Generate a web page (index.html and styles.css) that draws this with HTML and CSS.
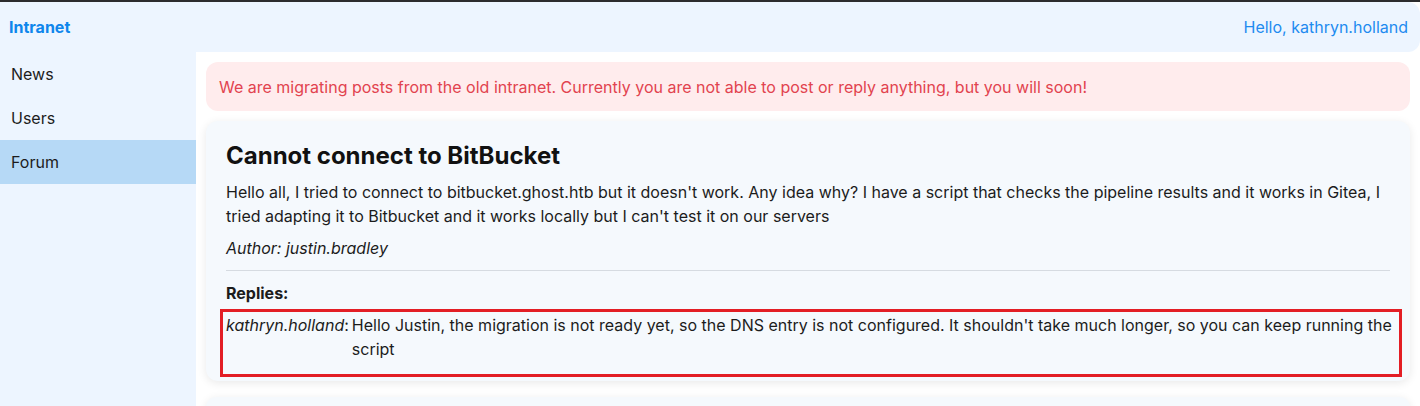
FILE: index.html
```html
<!DOCTYPE html>
<html>
<head>
<meta charset="utf-8">
<link rel="stylesheet" href="styles.css">
</head>
<body>
<div class="topline"></div>
<header class="header">
  <a class="brand">Intranet</a>
  <span class="hello">Hello, kathryn.holland</span>
</header>
<div class="layout">
  <nav class="sidebar">
    <div class="nav-item">News</div>
    <div class="nav-item">Users</div>
    <div class="nav-item active">Forum</div>
  </nav>
  <main class="main">
    <div class="alert">We are migrating posts from the old intranet. Currently you are not able to post or reply anything, but you will soon!</div>
    <section class="card">
      <h2 class="title">Cannot connect to BitBucket</h2>
      <p class="body">Hello all, I tried to connect to bitbucket.ghost.htb but it doesn't work. Any idea why? I have a script that checks the pipeline results and it works in Gitea, I tried adapting it to Bitbucket and it works locally but I can't test it on our servers</p>
      <p class="author">Author: justin.bradley</p>
      <hr class="divider">
      <div class="replies-label">Replies:</div>
      <div class="reply">
        <span class="reply-author"><em>kathryn.holland</em>:</span>
        <span class="reply-text">Hello Justin, the migration is not ready yet, so the DNS entry is not configured. It shouldn't take much longer, so you can keep running the script</span>
      </div>
    </section>
    <section class="card next"></section>
  </main>
</div>
</body>
</html>
```

FILE: styles.css
```css
* { box-sizing: border-box; }
html, body { margin: 0; padding: 0; }
body {
  font-family: Inter, "Noto Sans", sans-serif;
  font-size: 16px;
  line-height: 24px;
  color: #1c1c1c;
  background: #ffffff;
  height: 406px;
  overflow: hidden;
}
.topline { height: 2px; background: #2c2c2e; }
.header {
  height: 50px;
  background: #edf5ff;
  display: flex;
  align-items: center;
  justify-content: space-between;
  padding: 0 12px 0 9px;
  border-radius: 0 12px 12px 0;
}
.brand { color: #0f86ec; font-weight: 700; font-size: 16px; }
.hello { color: #1e8bf0; font-size: 16px; }
.layout { display: flex; height: 354px; overflow: hidden; }
.sidebar { width: 196px; background: #edf5ff; flex-shrink: 0; }
.nav-item { height: 44px; display: flex; align-items: center; padding-left: 11px; color: #1c1c1c; }
.nav-item.active { background: #b6d9f6; }
.main { flex: 1; padding: 10px 10px 0 10px; background: #fff; overflow: hidden; }
.alert {
  background: #ffeced;
  color: #e2434f;
  border-radius: 12px;
  padding: 13px 13px 12px;
}
.card {
  margin-top: 10px;
  background: #f5f9fd;
  border-radius: 12px;
  box-shadow: 0 2px 10px rgba(0,0,0,0.09);
  padding: 20px 20px 4px 20px;
}
.title { margin: 0; font-size: 24px; line-height: 30px; font-weight: 700; color: #111; }
.body { margin: 9px 0 0; }
.author { margin: 8px 0 0; font-style: italic; }
.divider { margin: 10px 0 0; border: 0; border-top: 1px solid #d6dbe1; }
.replies-label { margin-top: 10px; font-weight: 700; }
.reply {
  display: flex;
  margin: 4px -12px 0 -6px;
  border: 3px solid #e31e25;
  padding: 1px 4px 13px 3px;
}
.reply-author { white-space: pre; flex-shrink: 0; margin-right: 3px; }
.reply-text { flex: 1; }
.card.next { margin-top: 16px; height: 20px; padding: 0; }
```
